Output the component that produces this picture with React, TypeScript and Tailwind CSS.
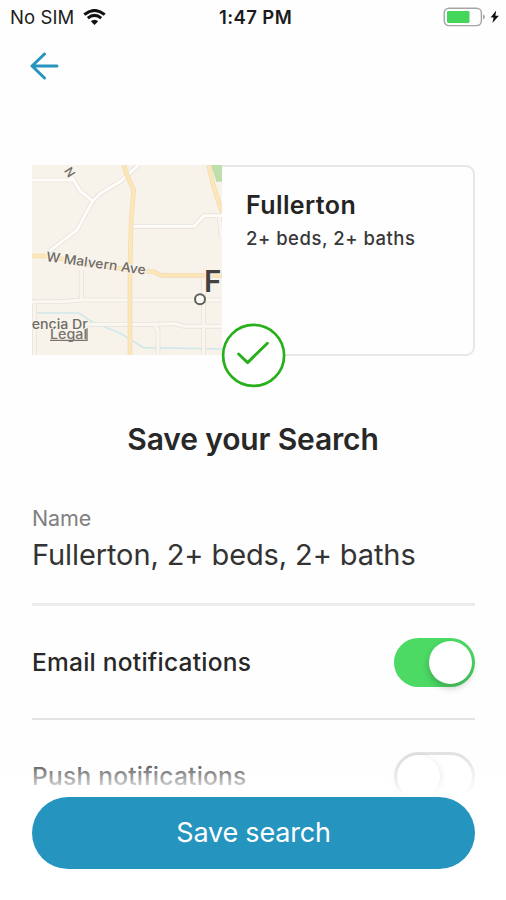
function StatusBar() {
  return (
    <div className="flex h-[34px] items-center justify-between pr-[6px] pl-[10px] text-[18px] leading-[33px] text-[#1c1c1c]">
      <div className="flex w-[209px] items-center">
        <span className="w-[73px] text-[18.5px] tracking-[0.1px] whitespace-nowrap">No SIM</span>
        <svg className="h-[17px] w-[23px] shrink-0" viewBox="0 0 23 17" fill="none">
          <path d="M1.3 5.6Q11.5-2.6 21.7 5.6" stroke="#111" strokeWidth="3.1" />
          <path d="M4.8 9.1Q11.5 3.7 18.2 9.1" stroke="#111" strokeWidth="3" />
          <path d="M7.8 12.3Q11.5 9.3 15.2 12.3L11.5 16Z" fill="#111" />
        </svg>
      </div>
      <span className="text-[18.5px] font-semibold tracking-[0.4px] whitespace-nowrap">1:47 PM</span>
      <div className="flex flex-1 items-center justify-end">
        <svg className="h-[20px] w-[58px]" viewBox="0 0 58 20" fill="none">
          <rect x="2.2" y="1.2" width="37.2" height="17.4" rx="4.8" stroke="#a5a5a5" strokeWidth="1.4" />
          <rect x="5" y="3.9" width="22.5" height="12" rx="1.3" fill="#43d65a" />
          <path d="M41.4 7.2Q43.9 9.8 41.4 12.4Z" fill="#777" />
          <path d="M54.2 3.6L48.6 10.6H51.6L50.4 16.1L56.9 8.7H53.4Z" fill="#111" />
        </svg>
      </div>
    </div>
  );
}

function MapPreview() {
  return (
    <svg className="h-[190px] w-[190px] shrink-0" viewBox="35 30 570 570" fill="none" fontFamily="Inter, sans-serif">
      <rect x="35" y="30" width="570" height="570" fill="#f8f3ea" />
      <path d="M572 30H605V80H588Z" fill="#bfdfaa" />
      <path d="M35 474H175L215 500L300 535L370 578L605 582" stroke="#cfe8ea" strokeWidth="5" />
      <g stroke="#e6e2dc" strokeWidth="14" strokeLinejoin="round">
        <path d="M35 75H160" />
        <path d="M150 60L180 108L217 138L170 225L85 290" />
        <path d="M217 138L242 114L300 80L355 30" />
        <path d="M335 214H522L550 182H605" />
        <path d="M597 185L603 250" />
        <path d="M35 440H120L185 435H605" />
        <path d="M184 345V435" />
        <path d="M200 508H400L465 506L490 514H605" />
        <path d="M400 508L413 525V600" />
        <path d="M550 370V600" />
        <path d="M42 445V600" />
      </g>
      <g stroke="#fffdfa" strokeWidth="9" strokeLinejoin="round">
        <path d="M35 75H160" />
        <path d="M150 60L180 108L217 138L170 225L85 290" />
        <path d="M217 138L242 114L300 80L355 30" />
        <path d="M335 214H522L550 182H605" />
        <path d="M597 185L603 250" stroke="#faf6ef" />
        <path d="M35 440H120L185 435H605" stroke="#fbf8f2" />
        <path d="M184 345V435" stroke="#faf6ef" />
        <path d="M200 508H400L465 506L490 514H605" stroke="#fbf8f2" />
        <path d="M400 508L413 525V600" stroke="#faf6ef" />
        <path d="M550 370V600" stroke="#faf6ef" />
        <path d="M42 445V600" stroke="#faf6ef" />
      </g>
      <g stroke="#f3dcb4" strokeWidth="14" strokeLinejoin="round">
        <path d="M310 30L322 65L340 105L333 190L329 330V600" />
        <path d="M35 303H75L200 325L330 345L403 351L422 361H605" />
        <path d="M565 30L577 85L605 172" />
      </g>
      <g stroke="#fde6b8" strokeWidth="9" strokeLinejoin="round">
        <path d="M310 30L322 65L340 105L333 190L329 330V600" />
        <path d="M35 303H75L200 325L330 345L403 351L422 361H605" />
        <path d="M565 30L577 85L605 172" />
      </g>
      <g fill="#6f6b67" stroke="#f9f5ed" strokeWidth="6" paintOrder="stroke" strokeLinejoin="round" fontWeight="500">
        <text x="-13" y="13" fontSize="36" transform="translate(148 51) rotate(57)">N</text>
        <text x="76" y="318" fontSize="40" textLength="301" lengthAdjust="spacingAndGlyphs" transform="rotate(7.8 76 318)">W Malvern Ave</text>
        <text x="34" y="521" fontSize="40" textLength="168" lengthAdjust="spacingAndGlyphs">encia Dr</text>
      </g>
      <text x="89" y="551" fontSize="39" textLength="111" lengthAdjust="spacingAndGlyphs" fontWeight="500" fill="#77736f" stroke="#f9f5ed" strokeWidth="4" paintOrder="stroke">Legal</text>
      <path d="M89 556H200V520" stroke="#77736f" strokeWidth="4" />
      <text x="551" y="410" fontSize="89" fontWeight="600" fill="#45413e" stroke="#f9f5ed" strokeWidth="6" paintOrder="stroke">F</text>
      <circle cx="539" cy="433" r="15" fill="#fbf9f5" stroke="#625e5a" strokeWidth="6" />
    </svg>
  );
}

function SearchCard() {
  return (
    <section className="relative mr-[31px] ml-[32px] mt-[68px] flex h-[191px]">
      <MapPreview />
      <div className="flex-1 rounded-r-[9px] border-2 border-l-0 border-[#e7e7e7] pl-[24px]">
        <h2 className="mt-[23px] text-[25px] leading-[30px] font-semibold tracking-[0.4px] whitespace-nowrap text-[#242424]">Fullerton</h2>
        <p className="mt-[6px] text-[18.5px] leading-[24px] font-medium tracking-[0.5px] whitespace-nowrap text-[#383838]">2+ beds, 2+ baths</p>
      </div>
      <svg className="absolute top-[158px] left-[189px] h-[65px] w-[65px]" viewBox="0 0 65 65" fill="none">
        <circle cx="32.6" cy="32.4" r="30.5" fill="#fff" stroke="#28b01a" strokeWidth="2.7" />
        <path d="M17.6 31L26.6 39.6L46.4 20.2" stroke="#28b01a" strokeWidth="2.9" strokeLinecap="round" strokeLinejoin="round" />
      </svg>
    </section>
  );
}

function Toggle({ on }: { on: boolean }) {
  return on ? (
    <div className="flex h-[49px] w-[81px] items-center justify-end rounded-full bg-[#4cd964] pr-[3px]">
      <div className="size-[43px] rounded-full bg-white shadow-[0_4px_7px_rgba(0,0,0,0.22)]" />
    </div>
  ) : (
    <div className="flex h-[49px] w-[81px] items-center rounded-full border-[3px] border-[#e2e2e2] bg-white">
      <div className="size-[43px] rounded-full bg-white shadow-[0_3px_6px_rgba(0,0,0,0.25)]" />
    </div>
  );
}

export default function App() {
  return (
    <main className="flex h-[900px] w-[506px] flex-col overflow-hidden bg-[#fefefe] font-['Inter',sans-serif] text-[#282828]">
      <StatusBar />
      <header className="h-[63px] px-[30px] pt-[17px]">
        <svg className="h-[30px] w-[30px]" viewBox="0 0 30 30" fill="none">
          <path d="M27 15H2M14.5 3L2 15L14.5 27" stroke="#2595bd" strokeWidth="3" strokeLinecap="round" strokeLinejoin="round" />
        </svg>
      </header>
      <SearchCard />
      <h1 className="mt-[65px] text-center text-[30px] leading-[36px] font-semibold tracking-[-0.15px] whitespace-nowrap">Save your Search</h1>
      <div className="mr-[31px] ml-[32px] mt-[48px] h-[101px]">
        <p className="text-[21.5px] leading-[26px] tracking-[-0.1px] whitespace-nowrap text-[#808080]">Name</p>
        <p className="mt-[6px] text-[29px] leading-[36px] tracking-[-0.1px] whitespace-nowrap text-[#333]">Fullerton, 2+ beds, 2+ baths</p>
      </div>
      <div className="mr-[31px] ml-[32px] -mt-[3px] h-[3px] shrink-0 bg-[#ebebeb]" />
      <div className="mr-[31px] ml-[32px] flex h-[114px] shrink-0 items-center justify-between border-b-2 border-[#e3e3e3]">
        <span className="text-[24.5px] font-medium tracking-[0.25px] whitespace-nowrap">Email notifications</span>
        <Toggle on />
      </div>
      <div className="grid flex-1">
        <div className="col-start-1 row-start-1 mr-[31px] ml-[32px] flex h-[112px] items-center justify-between">
          <span className="text-[24.5px] font-medium tracking-[0.25px] whitespace-nowrap">Push notifications</span>
          <Toggle on={false} />
        </div>
        <div className="relative col-start-1 row-start-1 bg-linear-to-b from-white/0 from-[34px] to-white to-[75px] pt-[77px] pr-[31px] pl-[32px]">
          <button className="h-[72px] w-full rounded-full bg-[#2595bf] pt-px text-[27px] tracking-[-0.2px] text-white">Save search</button>
        </div>
      </div>
    </main>
  );
}
